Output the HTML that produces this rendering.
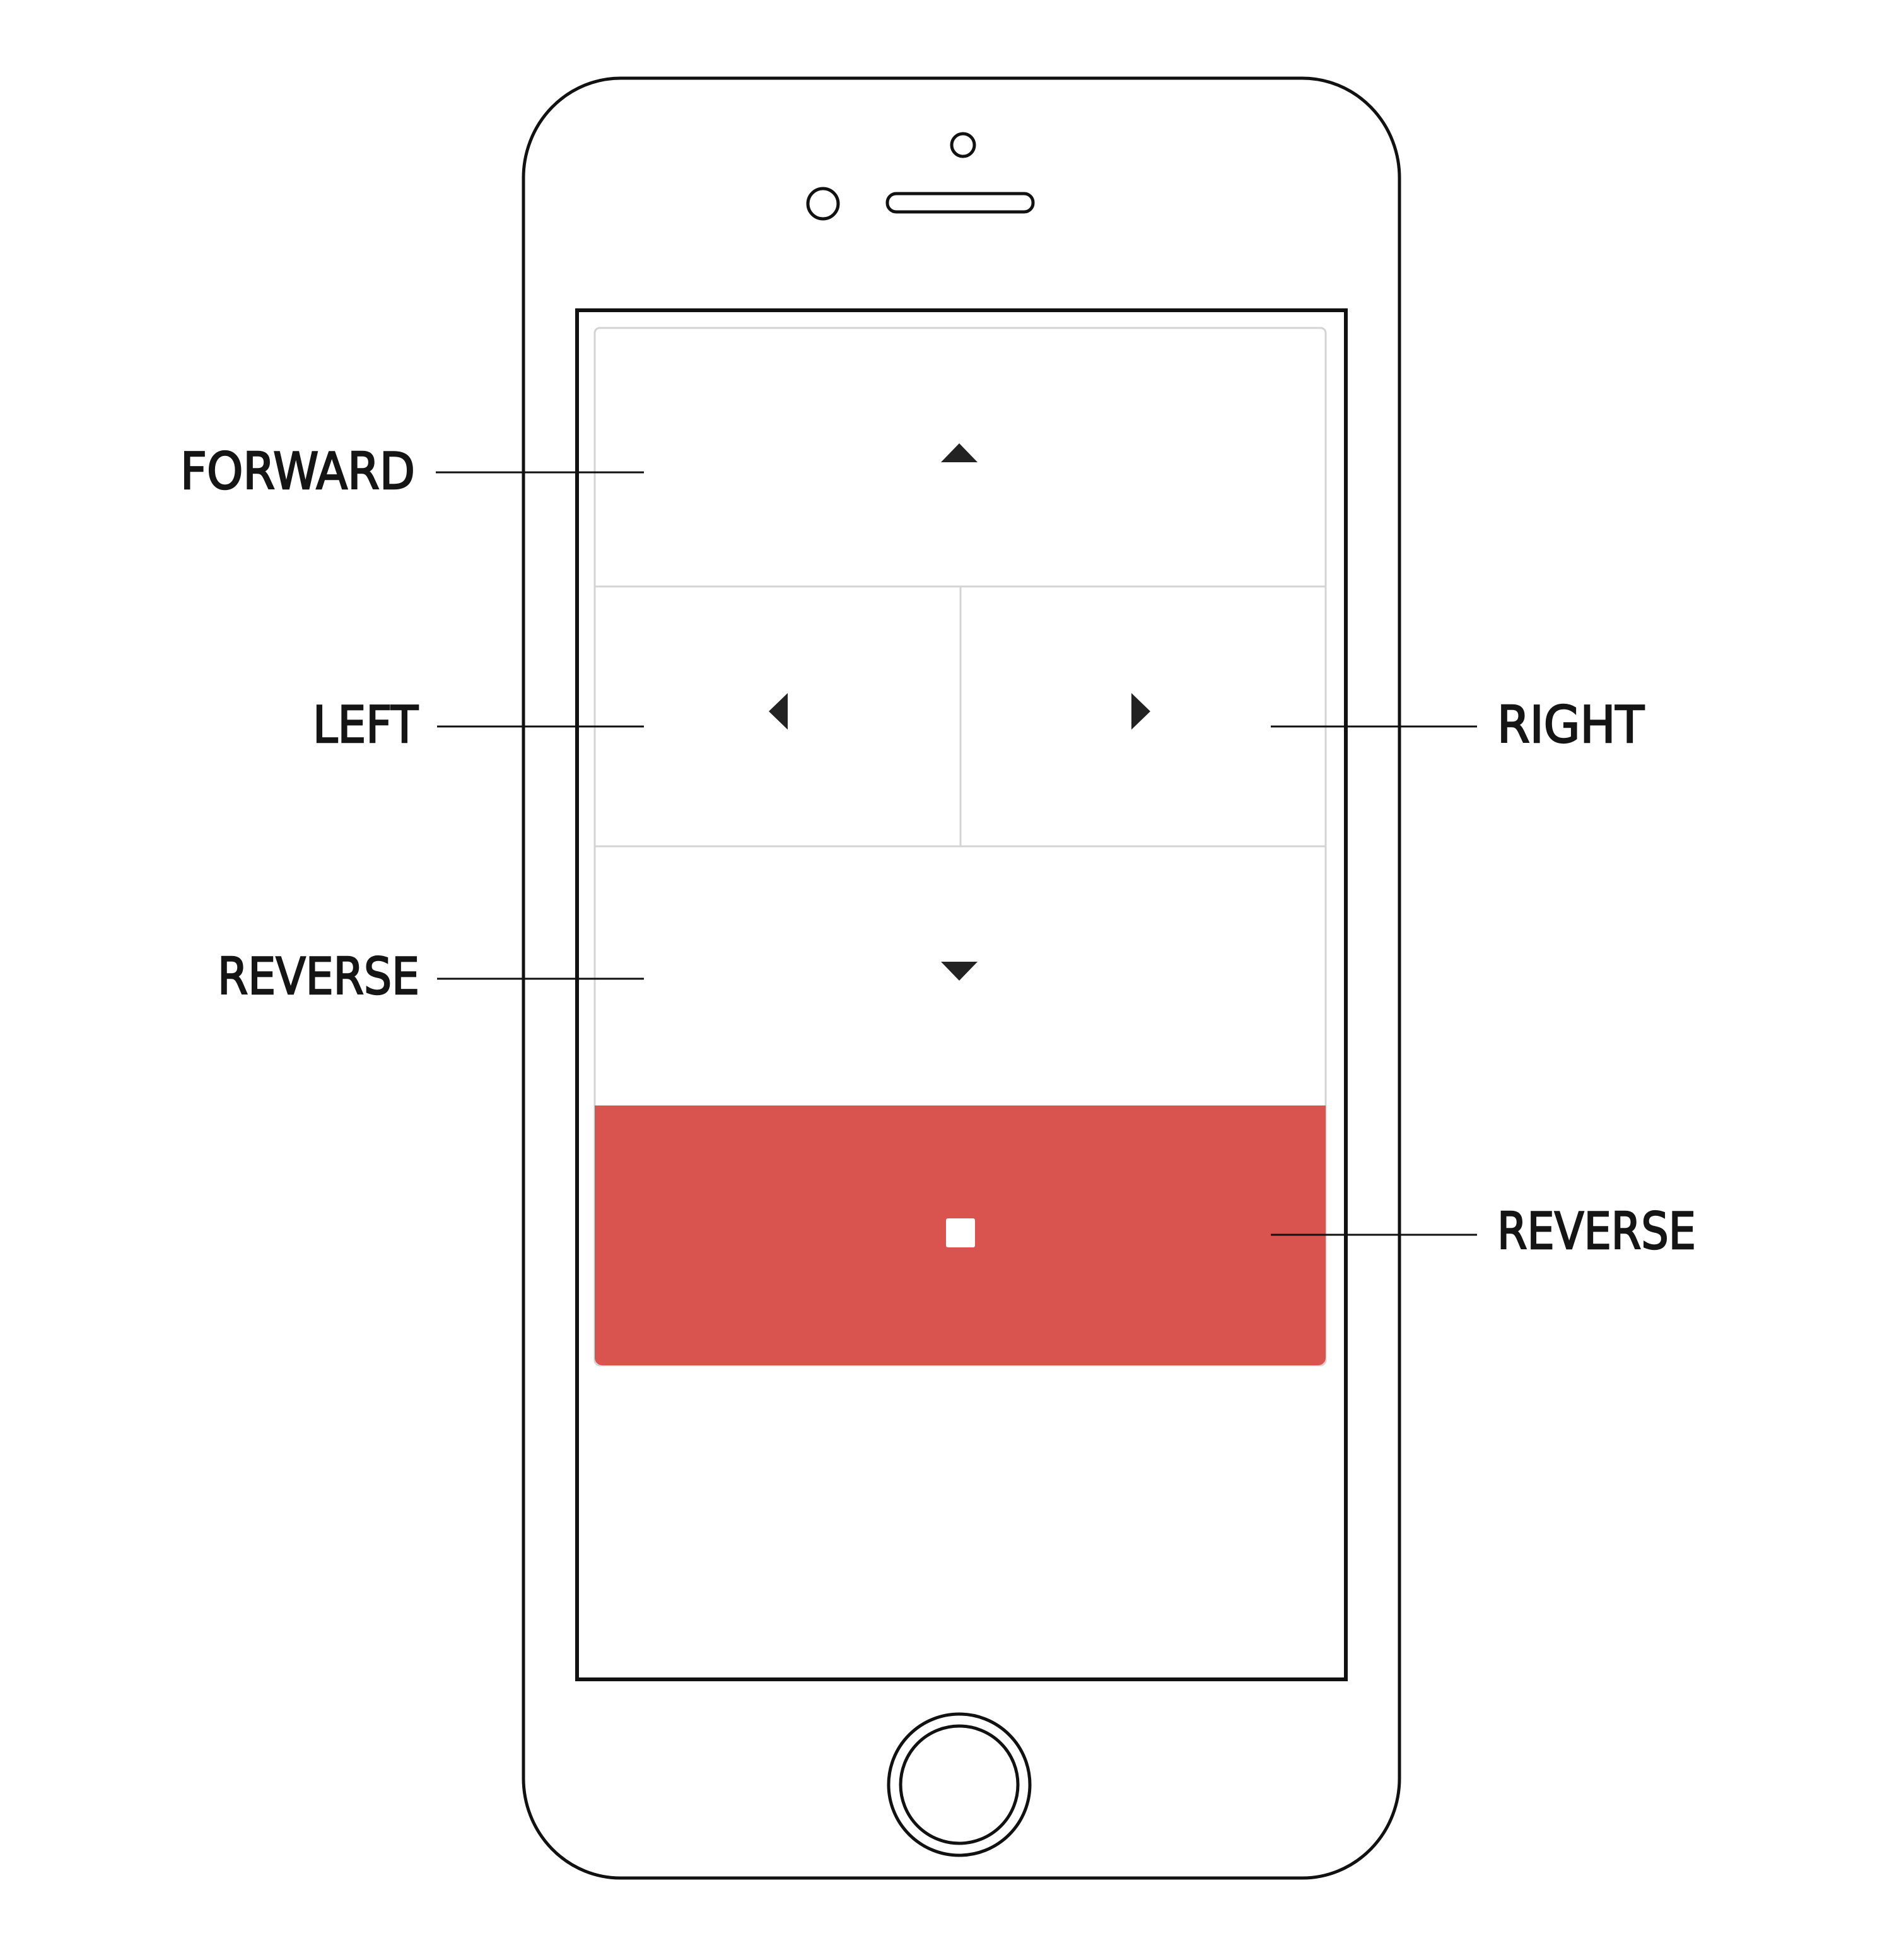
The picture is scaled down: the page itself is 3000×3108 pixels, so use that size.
<!DOCTYPE html>
<html><head><style>html,body{margin:0;padding:0;background:#fff;}svg{display:block}</style></head>
<body>
<svg width="3000" height="3108" viewBox="0 0 3000 3108" xmlns="http://www.w3.org/2000/svg">
<rect width="3000" height="3108" fill="#fff"/>
<rect x="830" y="124" width="1389" height="2854" rx="154" ry="158" fill="#fff" stroke="#111" stroke-width="5"/>
<circle cx="1527" cy="230" r="18" fill="none" stroke="#111" stroke-width="5"/>
<circle cx="1305" cy="323" r="24" fill="none" stroke="#111" stroke-width="5"/>
<rect x="1407" y="307" width="231" height="29" rx="14" fill="none" stroke="#111" stroke-width="5"/>
<rect x="915" y="492" width="1219" height="2171" fill="#fff" stroke="#111" stroke-width="6"/>
<rect x="943" y="520" width="1159" height="1645" rx="8" fill="#fff" stroke="#d4d4d4" stroke-width="3"/>
<line x1="943" y1="930" x2="2102" y2="930" stroke="#d4d4d4" stroke-width="3"/>
<line x1="943" y1="1342" x2="2102" y2="1342" stroke="#d4d4d4" stroke-width="3"/>
<line x1="1523" y1="930" x2="1523" y2="1342" stroke="#d4d4d4" stroke-width="3"/>
<path d="M943 1753 H2102 V2153 a12 12 0 0 1 -12 12 H955 a12 12 0 0 1 -12 -12 Z" fill="#d9534f"/>
<polygon points="1492,733 1550,733 1521,703" fill="#222"/>
<polygon points="1492,1525 1550,1525 1521,1555" fill="#222"/>
<polygon points="1249,1099 1249,1157 1219,1128" fill="#222"/>
<polygon points="1794,1099 1794,1157 1824,1128" fill="#222"/>
<rect x="1500" y="1932" width="46" height="46" rx="3" fill="#fff"/>
<circle cx="1521" cy="2830" r="112" fill="none" stroke="#111" stroke-width="5"/>
<circle cx="1521" cy="2830" r="93" fill="none" stroke="#111" stroke-width="5"/>
<g stroke="#111" stroke-width="3">
<line x1="691" y1="749" x2="1021" y2="749"/>
<line x1="693" y1="1152" x2="1021" y2="1152"/>
<line x1="693" y1="1552" x2="1021" y2="1552"/>
<line x1="2015" y1="1152" x2="2342" y2="1152"/>
<line x1="2015" y1="1958" x2="2342" y2="1958"/>
</g>
<g font-family="'DejaVu Sans','Liberation Sans',sans-serif" font-size="80" font-weight="normal" fill="#151515" stroke="#151515" stroke-width="2.5">
<text x="286" y="775" textLength="372" lengthAdjust="spacingAndGlyphs">FORWARD</text>
<text x="496" y="1177" textLength="167" lengthAdjust="spacingAndGlyphs">LEFT</text>
<text x="345" y="1576" textLength="320" lengthAdjust="spacingAndGlyphs">REVERSE</text>
<text x="2374" y="1177" textLength="233" lengthAdjust="spacingAndGlyphs">RIGHT</text>
<text x="2374" y="1980" textLength="315" lengthAdjust="spacingAndGlyphs">REVERSE</text>
</g>
</svg>
</body></html>
